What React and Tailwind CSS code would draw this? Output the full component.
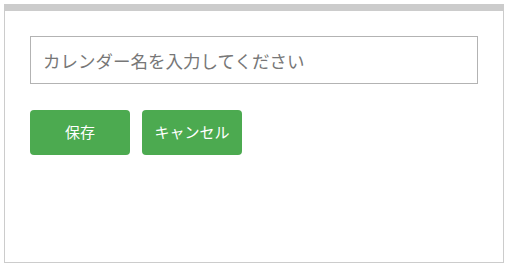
export default function App() {
  return (
    <div
      className="w-[508px] h-[268px] bg-white p-[4px]"
      style={{ fontFamily: '"Noto Sans CJK JP", "Noto Sans", sans-serif' }}
    >
      <div className="h-[259px] w-[500px] border border-[#cccccc] border-t-[7px] px-[25px] pt-[25px]">
        <input
          type="text"
          placeholder="カレンダー名を入力してください"
          className="block w-[448px] h-[48px] border border-[#b3b3b3] px-[12px] text-[17.5px] text-[#555] placeholder:text-[#777] outline-none"
        />
        <div className="flex gap-[12px] mt-[26px]">
          <button className="w-[100px] h-[45px] rounded-[4px] bg-[#4caa50] text-white text-[15px]">
            保存
          </button>
          <button className="w-[100px] h-[45px] rounded-[4px] bg-[#4caa50] text-white text-[15px]">
            キャンセル
          </button>
        </div>
      </div>
    </div>
  );
}
